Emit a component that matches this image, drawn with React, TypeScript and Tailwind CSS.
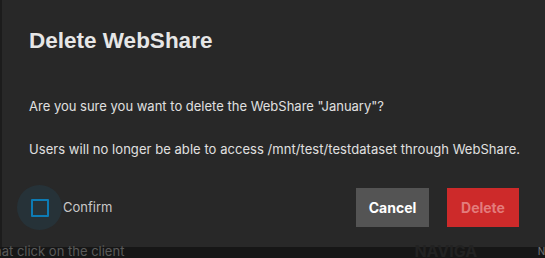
import React, { useState } from 'react';

export default function App() {
  const [confirmed, setConfirmed] = useState(false);

  return (
    <div className="w-[545px] h-[258px] bg-[#161616] overflow-hidden flex flex-col" style={{ fontFamily: 'Inter, "Liberation Sans", sans-serif' }}>
      <div className="flex h-[247px]">
        <div className="w-[2px] bg-[#1c1c1c]" />
        <div className="flex-1 bg-[#282828] flex flex-col pl-[27px] pr-[24px]">
          <h1 className="mt-[28px] text-[22.5px] leading-[26px] font-bold text-[#e6e6e6]" style={{ fontFamily: '"Liberation Sans", Arial, sans-serif' }}>
            Delete WebShare
          </h1>
          <p className="mt-[44px] text-[13px] leading-[16px] text-[#e0e0e0] whitespace-nowrap">
            Are you sure you want to delete the WebShare "January"?
          </p>
          <p className="mt-[27px] text-[13px] leading-[16px] tracking-[0.05px] text-[#e0e0e0] whitespace-nowrap">
            Users will no longer be able to access /mnt/test/testdataset through WebShare.
          </p>
          <div className="mt-[28px] flex items-center pr-[2px]">
            <label className="flex items-center cursor-pointer -ml-[12px]">
              <span className="w-[45px] h-[45px] rounded-full bg-[#263238] flex items-center justify-center">
                <input
                  type="checkbox"
                  className="sr-only"
                  checked={confirmed}
                  onChange={() => setConfirmed(!confirmed)}
                />
                <span className="w-[18px] h-[18px] border-2 border-[#0d7bb4] rounded-[1px]" />
              </span>
              <span className="ml-[1px] text-[13px] text-[#c8c8c8]">Confirm</span>
            </label>
            <div className="ml-auto flex gap-[18px]">
              <button className="w-[73px] h-[39px] bg-[#545454] text-white text-[14px] font-bold">Cancel</button>
              <button
                disabled={!confirmed}
                className="w-[72px] h-[39px] bg-[#cd2a2a] text-[#e37c7c] text-[14px] font-bold"
              >
                Delete
              </button>
            </div>
          </div>
        </div>
      </div>
      <div className="flex-1 flex items-start text-[13px] text-[#5a5a5a] leading-[12px] -mt-[2px]">
        <span className="-ml-[6px]">hat click on the client</span>
        <span className="ml-[290px] text-[16px] font-bold text-[#222]">NAVIGA</span>
        <span className="ml-auto mr-[-6px] text-[10px] text-[#777]">Na</span>
      </div>
    </div>
  );
}
